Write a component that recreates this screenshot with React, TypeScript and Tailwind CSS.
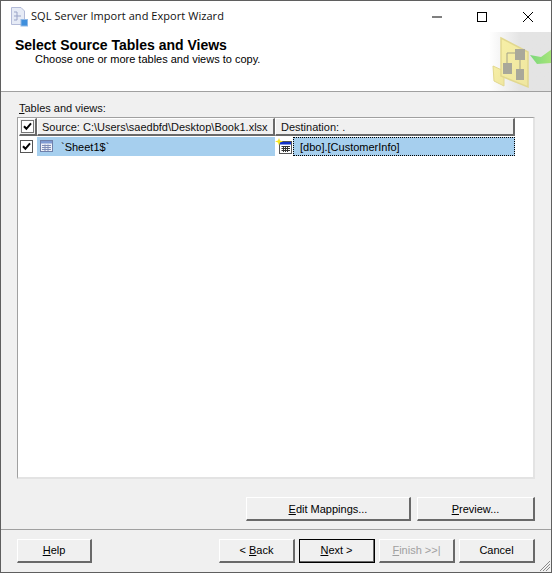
import React from "react";

const FONT = { fontFamily: '"Liberation Sans", Arial, sans-serif' };

function Btn({ w, children, disabled, def }: { w: string; children: React.ReactNode; disabled?: boolean; def?: boolean }) {
  return (
    <div className={`${w} ${def ? "outline outline-1 outline-black -outline-offset-1" : ""} h-[24px] flex items-center justify-center bg-[#f0f0f0] border-t border-l border-t-white border-l-white border-r-2 border-b-2 border-r-[#696969] border-b-[#696969] text-[11px] ${disabled ? "text-[#a0a0a0]" : "text-black"}`}>
      <span>{children}</span>
    </div>
  );
}

function Check({ sunk }: { sunk?: boolean }) {
  return (
    <div className={`w-[13px] h-[13px] bg-white border ${sunk ? "border-[#555]" : "border-[#777]"} flex items-center justify-center`}>
      <svg width="11" height="11" viewBox="0 0 11 11">
        <path d="M2 5.2 L4.4 7.8 L9 2.4" fill="none" stroke="#000" strokeWidth="2" />
      </svg>
    </div>
  );
}

function HeaderCell({ w, children }: { w: string; children?: React.ReactNode }) {
  return (
    <div className={`${w} h-[18px] shrink-0 flex items-center bg-[#f0f0f0] border-t border-l border-t-white border-l-white border-r-2 border-b-2 border-r-[#696969] border-b-[#696969] text-[11px] text-[#111] whitespace-nowrap overflow-hidden`}>
      {children}
    </div>
  );
}

function Doc() {
  return (
    <svg width="20" height="20" viewBox="0 0 20 20">
      <path d="M1.5 0.5 H11 L14.5 4 V17.5 H1.5 Z" fill="#e6ebf6" stroke="#b3bbd8" />
      <path d="M4 5 H7 M4 9 H7 M4 13 H7 M7 5 V13 M7 9 H11" stroke="#99a3c7" fill="none" />
      <rect x="11" y="12.5" width="6.5" height="6.5" fill="#3f8fdc" stroke="#8fb8e6" />
    </svg>
  );
}

function SourceTableIcon() {
  return (
    <svg width="14" height="13" viewBox="0 0 14 13">
      <rect x="0.5" y="0.5" width="12" height="11" fill="#eef1f8" stroke="#6f80aa" />
      <rect x="1" y="1" width="11" height="2.5" fill="#7f9ad2" />
      <path d="M2 5.5 H11 M2 7.5 H11 M2 9.5 H11 M5 4.5 V11 M8 4.5 V11" stroke="#7f8db8" />
    </svg>
  );
}

function DestIcon() {
  return (
    <svg width="17" height="17" viewBox="0 0 17 17">
      <rect x="4.5" y="3.5" width="12" height="12" fill="#fff" stroke="#555" />
      <rect x="5" y="4" width="11" height="2.5" fill="#1131c8" />
      <path d="M6.5 8.5 H15 M6.5 10.5 H15 M6.5 12.5 H15 M8.5 8 V14 M10.5 8 V14 M12.5 8 V14" stroke="#333" />
      <path d="M4 0 L5 2.5 L8 3.5 L5 4.5 L4 7.5 L3 4.5 L0 3.5 L3 2.5 Z" fill="#f5e61f" />
    </svg>
  );
}

function WizardArt() {
  return (
    <svg width="62" height="59" viewBox="0 0 62 59">
      <defs>
        <linearGradient id="pg" x1="0" x2="1" y1="0" y2="1">
          <stop offset="0" stopColor="#f7efa6" />
          <stop offset="1" stopColor="#efe6a0" />
        </linearGradient>
        <linearGradient id="ar" x1="1" x2="0" y1="0" y2="0">
          <stop offset="0" stopColor="#a2e56e" />
          <stop offset="1" stopColor="#6fd66f" />
        </linearGradient>
      </defs>
      <path d="M4 34 L15 39 V54 L5 49 Z" fill="url(#pg)" stroke="#e2d88f" />
      <path d="M12 6 L39 20 L39 55 L12 44 Z" fill="url(#pg)" stroke="#e2d88f" strokeWidth="1.5" />
      <rect x="26" y="17" width="10" height="11" fill="#a9a89a" />
      <rect x="14" y="31" width="9" height="11" fill="#a9a89a" />
      <rect x="27" y="37" width="8" height="11" fill="#a9a89a" />
      <path d="M26 21 H18 V31 M31 28 V37" stroke="#a3a289" fill="none" />
      <path d="M41 23 L52 25 L63 17 V31 L48 32 Z" fill="url(#ar)" opacity="0.9" />
    </svg>
  );
}

export default function App() {
  return (
    <div style={FONT} className="relative w-[552px] h-[573px] flex flex-col overflow-hidden bg-[#f0f0f0] border border-[#5f5f5f] text-black">
      <div className="h-[31px] shrink-0 bg-white flex items-center">
        <div className="ml-[9px] mt-[1px] w-[20px] h-[20px]"><Doc /></div>
        <span className="ml-[1px] text-[11px] tracking-[0.05px] text-[#111]" style={{ fontFamily: '"Open Sans", sans-serif' }}>SQL Server Import and Export Wizard</span>
        <div className="ml-auto flex items-center">
          <svg width="46" height="30" viewBox="0 0 46 30"><path d="M19 15 H29" stroke="#000" /></svg>
          <svg width="46" height="30" viewBox="0 0 46 30"><rect x="18.5" y="10.5" width="9" height="9" fill="none" stroke="#000" /></svg>
          <svg width="46" height="30" viewBox="0 0 46 30"><path d="M18 10 L28 20 M28 10 L18 20" stroke="#000" /></svg>
        </div>
      </div>

      <div className="relative h-[53px] shrink-0 bg-white border-b border-b-[#a0a0a0] pl-[14px] pt-[6px] overflow-hidden box-content">
        <div className="absolute right-0 top-0 bottom-0 w-[62px] bg-gradient-to-r from-white to-[#e4e4e4] to-50%" />
        <div className="absolute right-0 top-0"><WizardArt /></div>
        <div className="relative text-[14px] leading-[14px] font-bold">Select Source Tables and Views</div>
        <div className="relative pl-[20px] text-[11px] leading-[14px]">Choose one or more tables and views to copy.</div>
      </div>

      <div className="flex-1 flex flex-col px-[16px] min-h-0">
        <div className="text-[11px] leading-[14px] mt-[9px] pl-[2px] text-[#111]"><u>T</u>ables and views:</div>
        <div className="mt-[2px] w-[518px] h-[362px] bg-white border-t border-l border-t-[#a0a0a0] border-l-[#a0a0a0] border-r-2 border-b-2 border-r-[#e3e3e3] border-b-[#e3e3e3]">
          <div className="flex bg-white pl-[1px]">
            <HeaderCell w="w-[18px]"><div className="ml-[1px]"><Check /></div></HeaderCell>
            <HeaderCell w="w-[238px]"><span className="pl-[4px] pt-[2px]">Source: C:\Users\saedbfd\Desktop\Book1.xlsx</span></HeaderCell>
            <HeaderCell w="w-[240px]"><span className="pl-[5px] pt-[2px]">Destination: .</span></HeaderCell>
          </div>
          <div className="flex h-[19px] mt-[1px] pl-[1px]">
            <div className="w-[18px] shrink-0 bg-white flex items-center pl-[1px]"><Check sunk /></div>
            <div className="w-[238px] shrink-0 bg-[#a6cfee] flex items-center pl-[3px] text-[11px]">
              <SourceTableIcon />
              <span className="ml-[7px] pt-[2px]">`Sheet1$`</span>
            </div>
            <div className="w-[18px] shrink-0 bg-white flex items-center"><DestIcon /></div>
            <div className="w-[222px] shrink-0 bg-[#a6cfee] border border-dotted border-black flex items-center pl-[6px] pt-[2px] text-[11px]">[dbo].[CustomerInfo]</div>
          </div>
        </div>
        <div className="mt-[18px] flex justify-end gap-[6px]">
          <Btn w="w-[165px] pt-[1px]"><u>E</u>dit Mappings...</Btn>
          <Btn w="w-[118px] pt-[1px]"><u>P</u>review...</Btn>
        </div>
      </div>

      <div className="h-[1px] bg-[#a0a0a0] shrink-0" />
      <div className="h-[42px] shrink-0 flex items-start pt-[9px] pl-[16px] gap-[4px]">
        <Btn w="w-[75px] mr-[123px]"><u>H</u>elp</Btn>
        <Btn w="w-[76px]">&lt; <u>B</u>ack</Btn>
        <Btn w="w-[76px]" def><u>N</u>ext &gt;</Btn>
        <Btn w="w-[76px]" disabled><u>F</u>inish &gt;&gt;|</Btn>
        <Btn w="w-[76px]">Cancel</Btn>
      </div>
      <svg className="absolute right-0 bottom-0" width="14" height="14" viewBox="0 0 14 14">
        <path d="M13 3 L3 13 M13 6 L6 13 M13 9 L9 13" stroke="#8a8a8a" />
      </svg>
    </div>
  );
}
